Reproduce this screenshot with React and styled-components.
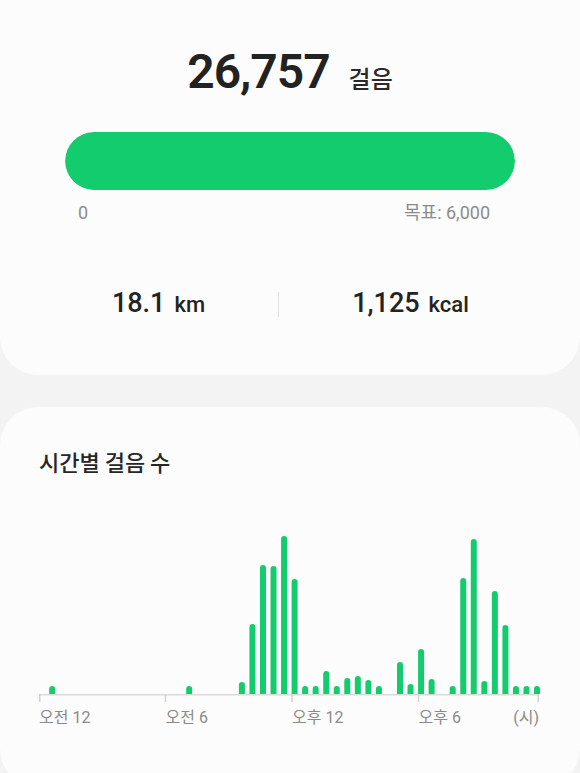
import React from "react";
import styled, { createGlobalStyle } from "styled-components";

const GREEN = "#13cc6e";

const GlobalStyle = createGlobalStyle`
  html, body {
    margin: 0;
    padding: 0;
    background: #f3f3f3;
  }
  body {
    font-family: "Roboto", "Noto Sans CJK KR", sans-serif;
    color: #242424;
    -webkit-font-smoothing: antialiased;
  }
`;

const Page = styled.div`
  display: flex;
  flex-direction: column;
  gap: 32px;
  width: 580px;
`;

const SummaryCard = styled.section`
  box-sizing: border-box;
  height: 375px;
  padding-top: 44px;
  background: #fcfcfc;
  border-radius: 0 0 38px 38px;
  display: flex;
  flex-direction: column;
`;

const Headline = styled.div`
  display: flex;
  justify-content: center;
  align-items: baseline;
  gap: 19px;
  height: 56px;
  line-height: 56px;
`;

const Count = styled.span`
  font-family: "Roboto", sans-serif;
  font-size: 48px;
  font-weight: 600;
  letter-spacing: -1px;
  color: #222;
`;

const CountUnit = styled.span`
  font-family: "Noto Sans CJK KR", sans-serif;
  font-size: 24px;
  line-height: 1;
  font-weight: 500;
  color: #2a2a2a;
`;

const Progress = styled.div`
  margin: 32px 65px 0;
  height: 58px;
  border-radius: 29px;
  background: #e6e6e6;
  overflow: hidden;
`;

const ProgressFill = styled.div`
  height: 100%;
  background: ${GREEN};
  border-radius: 29px;
`;

const ScaleRow = styled.div`
  margin: 12px 65px 0;
  padding: 0 25px 0 13px;
  display: flex;
  justify-content: space-between;
  font-size: 18px;
  line-height: 22px;
  color: #8c8c8c;
`;

const StatsRow = styled.div`
  margin-top: 63px;
  padding: 0 38px 0 39px;
  display: grid;
  grid-template-columns: 239px 1px 1fr;
  align-items: center;
`;

const Stat = styled.div`
  display: flex;
  justify-content: center;
  align-items: baseline;
  gap: 9px;
  line-height: 32px;
  color: #232323;
`;

const StatValue = styled.span`
  font-size: 27px;
  font-weight: 500;
`;

const StatUnit = styled.span`
  font-size: 22px;
  font-weight: 500;
`;

const Divider = styled.div`
  width: 1px;
  height: 25px;
  background: #e2e2e2;
`;

const ChartCard = styled.section`
  box-sizing: border-box;
  min-height: 380px;
  padding-top: 41px;
  background: #fcfcfc;
  border-radius: 38px;
`;

const ChartTitle = styled.h2`
  margin: 0;
  padding-left: 39px;
  font-family: "Noto Sans CJK KR", sans-serif;
  font-size: 22px;
  line-height: 26px;
  font-weight: 500;
  color: #262626;
`;

const ChartArea = styled.div`
  margin-top: 56px;
  padding-left: 39px;
`;

const ChartSvg = styled.svg`
  display: block;
  overflow: visible;
`;

const AxisLabels = styled.div`
  margin: 3px 0 0 39px;
  width: 500px;
  display: grid;
  grid-template-columns: repeat(3, 126.5px) 1fr;
  font-size: 16px;
  line-height: 20px;
  color: #8a8a8a;
`;

const AxisLabel = styled.span`
  display: flex;
  justify-content: ${(p) => (p.$split ? "space-between" : "flex-start")};
`;

const bars = {
  1: 8, 14: 8, 19: 12, 20: 70, 21: 129, 22: 128, 23: 158, 24: 115,
  25: 8, 26: 8, 27: 23, 28: 8, 29: 16, 30: 18, 31: 14, 32: 8,
  34: 32, 35: 10, 36: 45, 37: 15, 39: 8, 40: 116, 41: 155, 42: 13,
  43: 103, 44: 69, 45: 8, 46: 8, 47: 8,
};

const BIN = 10.54;
const BASE = 164;
const BAR_W = 6;

function barPath(i, h) {
  const cx = BIN * (i + 0.25);
  const x = cx - BAR_W / 2;
  const r = BAR_W / 2;
  const top = BASE - h;
  return `M${x} ${BASE} V${top + r} A${r} ${r} 0 0 1 ${x + BAR_W} ${top + r} V${BASE} Z`;
}

function HourlyChart() {
  const ticks = [0, 126.5, 253, 379.5, 500];
  return (
    <ChartSvg width="500" height="175" viewBox="0 0 500 175">
      {Object.entries(bars).map(([i, h]) => (
        <path key={i} d={barPath(Number(i), h)} fill={GREEN} />
      ))}
      <line x1="0" y1={BASE + 0.75} x2="500" y2={BASE + 0.75} stroke="#dadada" strokeWidth="1.5" />
      {ticks.map((t) => (
        <line
          key={t}
          x1={Math.min(Math.max(t, 0.75), 499.25)}
          x2={Math.min(Math.max(t, 0.75), 499.25)}
          y1={BASE}
          y2={BASE + 8}
          stroke="#d2d2d2"
          strokeWidth="1.5"
        />
      ))}
    </ChartSvg>
  );
}

export default function App() {
  return (
    <>
      <GlobalStyle />
      <Page>
        <SummaryCard>
          <Headline>
            <Count>26,757</Count>
            <CountUnit>걸음</CountUnit>
          </Headline>
          <Progress>
            <ProgressFill style={{ width: `${Math.min(100, (26757 / 6000) * 100)}%` }} />
          </Progress>
          <ScaleRow>
            <span>0</span>
            <span>목표: 6,000</span>
          </ScaleRow>
          <StatsRow>
            <Stat>
              <StatValue>18.1</StatValue>
              <StatUnit>km</StatUnit>
            </Stat>
            <Divider />
            <Stat>
              <StatValue>1,125</StatValue>
              <StatUnit>kcal</StatUnit>
            </Stat>
          </StatsRow>
        </SummaryCard>
        <ChartCard>
          <ChartTitle>시간별 걸음 수</ChartTitle>
          <ChartArea>
            <HourlyChart />
          </ChartArea>
          <AxisLabels>
            <AxisLabel>오전 12</AxisLabel>
            <AxisLabel>오전 6</AxisLabel>
            <AxisLabel>오후 12</AxisLabel>
            <AxisLabel $split>
              <span>오후 6</span>
              <span>(시)</span>
            </AxisLabel>
          </AxisLabels>
        </ChartCard>
      </Page>
    </>
  );
}
